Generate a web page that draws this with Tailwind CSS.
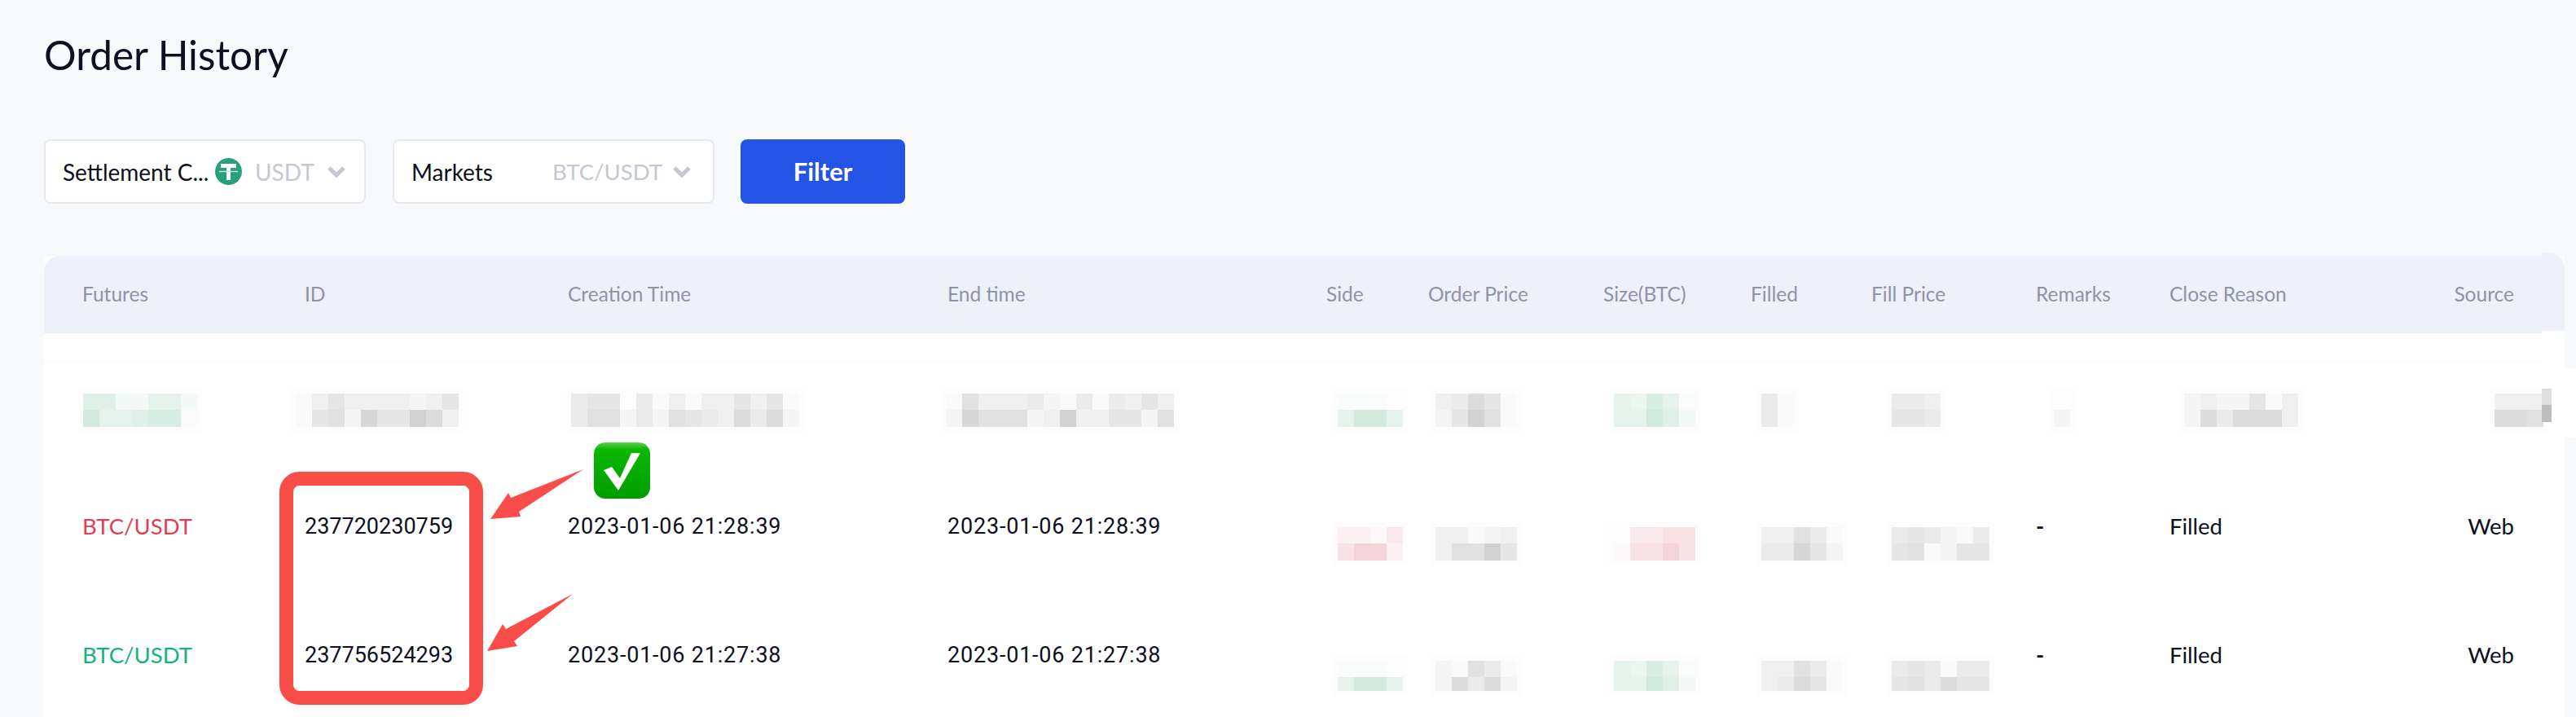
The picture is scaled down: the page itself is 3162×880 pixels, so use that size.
<!DOCTYPE html>
<html lang="en">
<head>
  <meta charset="UTF-8">
  <title>Order History</title>
  <script src="https://cdn.jsdelivr.net/npm/@tailwindcss/browser@4"></script>
</head>
<body class="relative h-[880px] overflow-hidden bg-[#f8f9fb] font-['Lato',sans-serif] text-[#0d1020]">

  <!-- Title -->
  <h1 class="pl-[54px] pt-[38px] text-[49.5px] leading-[58px] font-normal">Order History</h1>

  <!-- Filters -->
  <div class="mt-[75px] ml-[54px] flex h-[79px] items-stretch">
    <div class="flex w-[395px] items-center rounded-lg border-2 border-[#e6e9f3] bg-white pl-[21px] text-[28px]">
      <span class="w-[187px] whitespace-nowrap">Settlement C...</span>
      <svg class="h-[33px] w-[33px] shrink-0" viewBox="0 0 33 33">
        <circle cx="16.5" cy="16.5" r="16.5" fill="#26a17b"/>
        <path d="M7 7h19v5h-7v15h-5V12H7z" fill="#fff"/>
        <path d="M5 16.5h23" stroke="#bfe6d8" stroke-width="1.5" fill="none"/>
      </svg>
      <span class="ml-[16px] text-[#c5c8d3]">USDT</span>
      <svg class="ml-[16px] h-[15px] w-[22px]" viewBox="0 0 22 15"><path d="M2 3l9 9 9-9" stroke="#c5c8d3" stroke-width="5" fill="none"/></svg>
    </div>
    <div class="ml-[33px] flex w-[395px] items-center rounded-lg border-2 border-[#e6e9f3] bg-white pl-[21px] text-[28px]">
      <span class="w-[173px]">Markets</span>
      <span class="w-[148px] text-[27.5px] text-[#c5c8d3]">BTC/USDT</span>
      <svg class="h-[15px] w-[22px]" viewBox="0 0 22 15"><path d="M2 3l9 9 9-9" stroke="#c5c8d3" stroke-width="5" fill="none"/></svg>
    </div>
    <button class="ml-[32px] w-[202px] rounded-lg bg-[#2354e6] text-[31px] font-bold text-white">Filter</button>
  </div>

  <!-- Table -->
  <div class="absolute top-[314px] left-[54px] h-[566px] w-[3094px] bg-white">
    <div class="grid h-[95px] w-[3066px] grid-cols-[273px_323px_466px_465px_125px_215px_181px_148px_202px_164px_348px_75px] items-center rounded-tl-[20px] bg-[#eef0fa] pl-[47px] text-[24.5px] text-[#8f93a8]">
      <div>Futures</div><div>ID</div><div>Creation Time</div><div>End time</div><div>Side</div><div>Order Price</div><div>Size(BTC)</div><div>Filled</div><div>Fill Price</div><div>Remarks</div><div>Close Reason</div><div class="text-right whitespace-nowrap">Source</div>
    </div>
    <div class="absolute -top-[4px] right-0 h-[96px] w-[28px] rounded-tr-[20px] bg-[#eef0fa]"></div>

    <!-- Rows -->
    <div class="grid h-[158px] w-[3066px] grid-cols-[273px_323px_466px_465px_125px_215px_181px_148px_202px_164px_348px_75px] items-start pl-[47px] pt-[74px]">
      <div class="ml-[1px]" data-m="5522442|7445661" data-tint="g"></div>
      <div class="-ml-[11px]" data-m="1353333235|1562855973"></div>
      <div class="ml-[4px]" data-m="45504131335351|46624265437472"></div>
      <div class="-ml-[2px]" data-m="16333421414353|28666239335526"></div>
      <div class="ml-[14px]" data-m="1110|4774" data-tint="g"></div>
      <div class="ml-[9px]" data-m="34751|25961"></div>
      <div class="ml-[13px]" data-m="43641|44752" data-tint="g"></div>
      <div class="ml-[13px]" data-m="41|41"></div>
      <div class="ml-[25px]" data-m="443|554"></div>
      <div class="ml-[22px]" data-m="0|2"></div>
      <div class="ml-[18px]" data-m="2322513|2747773"></div>
      <div class="ml-[51px]" data-m="333|776"></div>
    </div>
    <div class="grid h-[158px] w-[3066px] grid-cols-[273px_323px_466px_465px_125px_215px_181px_148px_202px_164px_348px_75px] items-start pl-[47px] text-[27.5px] leading-[158px]">
      <div class="text-[#dd3f57]">BTC/USDT</div>
      <div class="font-['Roboto',sans-serif] text-[27px]">237720230759</div>
      <div class="font-['Roboto',sans-serif] text-[27px] tracking-[0.8px]">2023-01-06 21:28:39</div>
      <div class="font-['Roboto',sans-serif] text-[27px] tracking-[0.8px]">2023-01-06 21:28:39</div>
      <div class="mt-[80px] ml-[14px]" data-m="2213|4662" data-tint="r"></div>
      <div class="mt-[80px] ml-[9px]" data-m="33123|36695"></div>
      <div class="mt-[80px] ml-[13px]" data-m="03344|14464" data-tint="r"></div>
      <div class="mt-[80px] ml-[13px]" data-m="33641|44852"></div>
      <div class="mt-[80px] ml-[25px]" data-m="454214|561255"></div>
      <div class="font-bold">-</div>
      <div>Filled</div>
      <div class="text-right">Web</div>
    </div>
    <div class="grid h-[158px] w-[3066px] grid-cols-[273px_323px_466px_465px_125px_215px_181px_148px_202px_164px_348px_75px] items-start pl-[47px] text-[27.5px] leading-[158px]">
      <div class="text-[#14b37d]">BTC/USDT</div>
      <div class="font-['Roboto',sans-serif] text-[27px]">237756524293</div>
      <div class="font-['Roboto',sans-serif] text-[27px] tracking-[0.8px]">2023-01-06 21:27:38</div>
      <div class="font-['Roboto',sans-serif] text-[27px] tracking-[0.8px]">2023-01-06 21:27:38</div>
      <div class="mt-[86px] ml-[14px]" data-m="1110|4774" data-h="37" data-tint="g"></div>
      <div class="mt-[86px] ml-[9px]" data-m="21641|27472" data-h="37"></div>
      <div class="mt-[86px] ml-[13px]" data-m="43641|44752" data-h="37" data-tint="g"></div>
      <div class="mt-[86px] ml-[13px]" data-m="33641|34751" data-h="37"></div>
      <div class="mt-[86px] ml-[25px]" data-m="454144|564755" data-h="37"></div>
      <div class="font-bold">-</div>
      <div>Filled</div>
      <div class="text-right">Web</div>
    </div>
  </div>

  <!-- Annotations drawn on the screenshot -->
  <svg class="absolute top-0 left-0 h-[880px] w-[3162px]" viewBox="0 0 3162 880" fill="none">
    <defs>
      <linearGradient id="tick" x1="0" y1="0" x2="0" y2="1">
        <stop offset="0" stop-color="#5fd04f"/>
        <stop offset="0.12" stop-color="#0cb800"/>
        <stop offset="1" stop-color="#009c00"/>
      </linearGradient>
    </defs>
    <rect x="3148" y="452" width="14" height="85" fill="#fff"/>
    <rect x="3120" y="477" width="12" height="20" fill="#dedede"/>
    <rect x="3120" y="497" width="12" height="21" fill="#bdbdbd"/>
    <rect x="54" y="441" width="3066" height="5" fill="#fdfdfd"/>
    <rect x="351.5" y="587.5" width="233" height="269" rx="16" stroke="#f94d4a" stroke-width="17"/>
    <path d="M602 637L624 605L627 611L716 576L637 628L639 634Z" fill="#f94d4a"/>
    <path d="M598 799L617 766L621 772L703 729L631 787L635 793Z" fill="#f94d4a"/>
    <rect x="729" y="543" width="69" height="69" rx="14" fill="url(#tick)"/>
    <path d="M741 577L751 573L761 587L775 556L786 556L759 602Z" fill="#fff"/>
  </svg>

  <script>
    // Pixelated (censored) cells: each digit is how dark the cell is
    const tints = {
      n: [5, 5, 5],
      g: [6.5, 3, 4.7],
      r: [1.6, 7.2, 6.4]
    };

    document.querySelectorAll("[data-m]").forEach(el => {
      const [top, bottom] = el.dataset.m.split("|");
      const tint = tints[el.dataset.tint || "n"];
      const height = Number(el.dataset.h || 41);
      const width = top.length * 20;
      let rects = `<rect x="-6" y="-6" width="${width + 12}" height="${height + 12}" fill="#fdfdfd"/>`;
      [top, bottom].forEach((line, row) => {
        [...line].forEach((d, col) => {
          if (d === "0") return;
          const [r, g, b] = tint.map(t => Math.round(255 - t * Number(d)));
          const h = row === 0 ? 20 : height - 20;
          rects += `<rect x="${col * 20}" y="${row * 20}" width="20" height="${h}" fill="rgb(${r},${g},${b})"/>`;
        });
      });
      el.innerHTML = `<svg width="${width}" height="${height}" class="overflow-visible" shape-rendering="crispEdges">${rects}</svg>`;
    });
  </script>
</body>
</html>
